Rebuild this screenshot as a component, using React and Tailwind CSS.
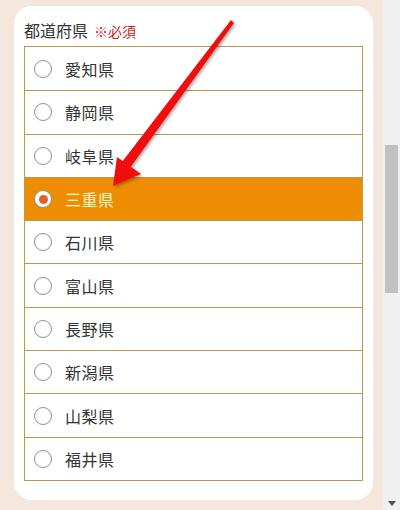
import React, { useState } from "react";

const prefectures = [
  "愛知県",
  "静岡県",
  "岐阜県",
  "三重県",
  "石川県",
  "富山県",
  "長野県",
  "新潟県",
  "山梨県",
  "福井県",
];

const font = { fontFamily: '"Noto Sans CJK JP", "Noto Sans", sans-serif' };

const Radio = ({ checked }) => (
  <span className="flex-shrink-0 w-[18px] h-[18px] rounded-full border border-[#8f8f8f] bg-white flex items-center justify-center">
    {checked && <span className="w-[9px] h-[9px] rounded-full bg-[#e0602a]" />}
  </span>
);

const App = () => {
  const [selected, setSelected] = useState("三重県");

  return (
    <div className="relative w-[400px] h-[510px] overflow-hidden flex bg-[#f3e7de]" style={font}>
      {/* Form card */}
      <div className="flex-1 pt-[6px] pl-[14px] pr-[10px]">
        <div className="bg-white rounded-[18px] px-[10px] pt-[12px] pb-[19px]">
          <div className="flex items-baseline gap-[6px] h-[28px]">
            <span className="text-[16px] text-[#333]">都道府県</span>
            <span className="text-[14px] text-[#cc1f1f]">※必須</span>
          </div>
          <div className="border border-[#b99a4c]">
            {prefectures.map((name, i) => {
              const checked = name === selected;
              return (
                <label
                  key={name}
                  onClick={() => setSelected(name)}
                  className={`flex items-center h-[43.3px] pl-[9px] gap-[13px] cursor-pointer ${
                    i > 0 ? "border-t border-[#b99a4c]" : ""
                  } ${checked ? "bg-[#ef8d02] text-[#fff6cf]" : "bg-white text-[#333]"}`}
                >
                  <Radio checked={checked} />
                  <span className="text-[16px] tracking-[0.5px]">{name}</span>
                </label>
              );
            })}
          </div>
        </div>
      </div>

      {/* Scrollbar */}
      <div className="w-[17px] bg-[#f0f0f0] flex flex-col items-center">
        <div className="w-[13px] h-[148px] mt-[145px] bg-[#c1c1c1]" />
        <div className="flex-1" />
        <svg width="8" height="5" viewBox="0 0 8 5" className="mb-[4px]">
          <path d="M0 0 L8 0 L4 5 Z" fill="#505050" />
        </svg>
      </div>

      {/* Red annotation arrow */}
      <svg
        className="absolute left-0 top-0 pointer-events-none"
        width="400"
        height="510"
        viewBox="0 0 400 510"
      >
        <defs>
          <filter id="sh" x="-20%" y="-20%" width="140%" height="140%">
            <feDropShadow dx="1.5" dy="1.5" stdDeviation="1.5" floodColor="#000" floodOpacity="0.35" />
          </filter>
        </defs>
        <g filter="url(#sh)" fill="#f01010">
          <path d="M231 20 L234 23 L130 168 L122 162 Z" />
          <path d="M113 186 L117 157 L141 174 Z" />
        </g>
      </svg>
    </div>
  );
};

export default App;
